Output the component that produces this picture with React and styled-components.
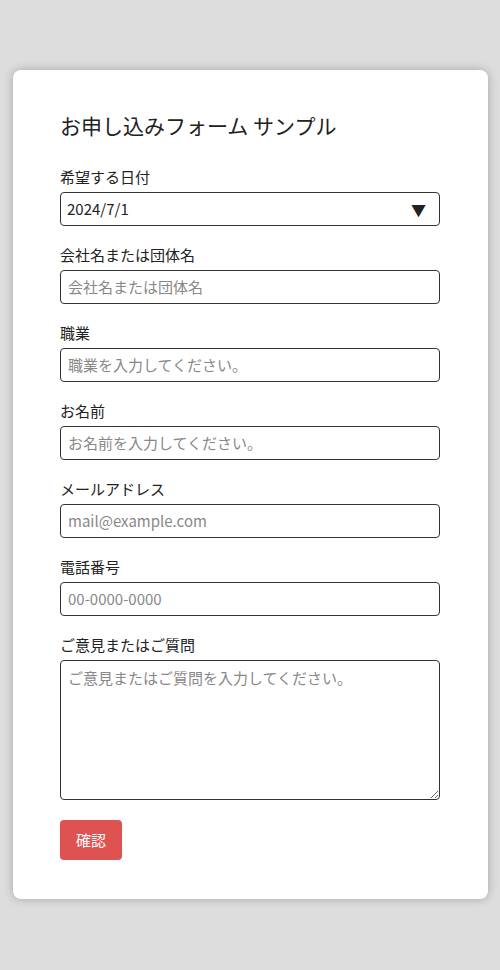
import React from 'react';
import styled, { createGlobalStyle } from 'styled-components';

const GlobalStyle = createGlobalStyle`
  html, body {
    margin: 0;
    background: #dddddd;
    font-family: "Noto Sans CJK JP", "Noto Sans", sans-serif;
    color: #222;
  }
`;

const Page = styled.div`
  padding: 70px 12px 70px 13px;
`;

const Card = styled.form`
  background: #fff;
  border-radius: 8px;
  box-shadow: 0 0 10px rgba(0, 0, 0, 0.25);
  padding: 40px 48px 39px 47px;
`;

const Title = styled.h1`
  margin: 0 0 20px;
  font-size: 21px;
  font-weight: 400;
  line-height: 1.5;
`;

const Field = styled.div`
  display: flex;
  flex-direction: column;
  margin-bottom: 14px;
`;

const Label = styled.label`
  font-size: 15px;
  line-height: 24px;
  padding-top: 3px;
  margin-bottom: 3px;
`;

const inputBase = `
  box-sizing: border-box;
  width: 100%;
  border: 1px solid #333;
  border-radius: 4px;
  font-family: "Noto Sans CJK JP", "Noto Sans", sans-serif;
  font-size: 15px;
  color: #222;
  background: #fff;
  padding: 0 7px;
  &::placeholder {
    color: #888;
  }
`;

const Input = styled.input`
  ${inputBase}
  height: 34px;
`;

const SelectWrap = styled.div`
  position: relative;
`;

const Select = styled.select`
  ${inputBase}
  height: 34px;
  padding-left: 6px;
  appearance: none;
`;

const Arrow = styled.span`
  position: absolute;
  right: 14px;
  top: 50%;
  transform: translateY(-50%);
  font-size: 15px;
  line-height: 1;
  pointer-events: none;
  color: #222;
`;

const TextArea = styled.textarea`
  ${inputBase}
  height: 140px;
  padding: 6px 7px;
  display: block;
`;

const Button = styled.button`
  margin-top: 6px;
  width: 62px;
  height: 40px;
  border: none;
  border-radius: 4px;
  background: #df5252;
  color: #fff;
  font-family: "Noto Sans CJK JP", "Noto Sans", sans-serif;
  font-size: 15px;
  cursor: pointer;
`;

const fields = [
  { label: '会社名または団体名', placeholder: '会社名または団体名' },
  { label: '職業', placeholder: '職業を入力してください。' },
  { label: 'お名前', placeholder: 'お名前を入力してください。' },
  { label: 'メールアドレス', placeholder: 'mail@example.com' },
  { label: '電話番号', placeholder: '00-0000-0000' },
];

export default function App() {
  return (
    <Page>
      <GlobalStyle />
      <Card onSubmit={(e) => e.preventDefault()}>
        <Title>お申し込みフォーム サンプル</Title>
        <Field>
          <Label>希望する日付</Label>
          <SelectWrap>
            <Select defaultValue="2024/7/1">
              <option>2024/7/1</option>
              <option>2024/7/2</option>
              <option>2024/7/3</option>
            </Select>
            <Arrow>▼</Arrow>
          </SelectWrap>
        </Field>
        {fields.map((f) => (
          <Field key={f.label}>
            <Label>{f.label}</Label>
            <Input placeholder={f.placeholder} />
          </Field>
        ))}
        <Field>
          <Label>ご意見またはご質問</Label>
          <TextArea placeholder="ご意見またはご質問を入力してください。" />
        </Field>
        <Button type="submit">確認</Button>
      </Card>
    </Page>
  );
}
